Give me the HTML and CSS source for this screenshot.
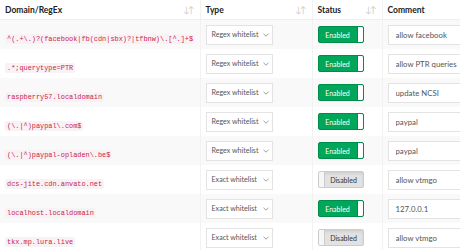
FILE: index.html
```html
<!DOCTYPE html>
<html lang="en">
<head>
  <meta charset="UTF-8">
  <title>Whitelist</title>
  <link rel="stylesheet" href="styles.css">
</head>
<body>
  <div class="table-wrap">
    <table class="list-table">
      <colgroup>
        <col class="col-domain">
        <col class="col-type">
        <col class="col-status">
        <col class="col-comment">
      </colgroup>
      <thead>
        <tr>
          <th><span>Domain/RegEx</span><span class="sort">&#8595;&#8593;</span></th>
          <th><span>Type</span><span class="sort">&#8595;&#8593;</span></th>
          <th><span>Status</span><span class="sort">&#8595;&#8593;</span></th>
          <th><span>Comment</span></th>
        </tr>
      </thead>
      <tbody id="rows"></tbody>
    </table>
  </div>

  <script>
    const entries = [
      ['^(.+\\.)?(facebook|fb(cdn|sbx)?|tfbnw)\\.[^.]+$', 'Regex whitelist', true, 'allow facebook'],
      ['.*;querytype=PTR', 'Regex whitelist', true, 'allow PTR queries'],
      ['raspberry57.localdomain', 'Regex whitelist', true, 'update NCSI'],
      ['(\\.|^)paypal\\.com$', 'Regex whitelist', true, 'paypal'],
      ['(\\.|^)paypal-opladen\\.be$', 'Regex whitelist', true, 'paypal'],
      ['dcs-jite.cdn.anvato.net', 'Exact whitelist', false, 'allow vtmgo'],
      ['localhost.localdomain', 'Exact whitelist', true, '127.0.0.1'],
      ['tkx.mp.lura.live', 'Exact whitelist', false, 'allow vtmgo']
    ];

    const tbody = document.getElementById('rows');

    entries.forEach(entry => {
      const [domain, type, enabled, comment] = entry;
      const tr = document.createElement('tr');

      const tdDomain = document.createElement('td');
      const code = document.createElement('code');
      code.textContent = domain;
      tdDomain.appendChild(code);

      const tdType = document.createElement('td');
      tdType.innerHTML =
        '<div class="select"><span class="select-text"></span>' +
        '<svg class="chevron" width="6" height="4" viewBox="0 0 6 4"><path d="M0.5 0.8 L3 3.2 L5.5 0.8" fill="none" stroke="#888" stroke-width="0.8"/></svg></div>';
      tdType.querySelector('.select-text').textContent = type;

      const tdStatus = document.createElement('td');
      tdStatus.innerHTML = enabled
        ? '<div class="toggle on"><span class="toggle-label">Enabled</span><span class="handle"></span></div>'
        : '<div class="toggle off"><span class="handle"></span><span class="toggle-label">Disabled</span></div>';

      const tdComment = document.createElement('td');
      const input = document.createElement('input');
      input.type = 'text';
      input.className = 'comment';
      input.value = comment;
      tdComment.appendChild(input);

      tr.append(tdDomain, tdType, tdStatus, tdComment);
      tbody.appendChild(tr);
    });
  </script>
</body>
</html>
```

FILE: styles.css
```css
body {
  margin: 0;
  background-color: #fff;
  font-family: Lato, "Liberation Sans", sans-serif;
  color: #333;
}
.table-wrap {
  width: 460px;
  height: 250px;
  overflow: hidden;
}
.list-table {
  table-layout: fixed;
  width: 520px;
  border-collapse: collapse;
}
.col-domain { width: 200px; }
.col-type { width: 112px; }
.col-status { width: 70px; }
.col-comment { width: 138px; }
.list-table th {
  height: 19px;
  padding: 0 5px;
  font-size: 8.5px;
  font-weight: bold;
  color: #222;
  text-align: left;
  border-bottom: 1px solid #eee;
  border-left: 1px solid #f2f2f2;
}
.list-table th:first-child,
.list-table td:first-child {
  border-left: none;
}
.list-table th span {
  vertical-align: middle;
}
.list-table th .sort {
  float: right;
  font-size: 9px;
  font-weight: normal;
  color: #ccc;
  letter-spacing: -2px;
  margin-right: 2px;
}
.list-table td {
  height: 29px;
  padding: 0 5px;
  border-left: 1px solid #f2f2f2;
  vertical-align: middle;
}
.list-table tbody tr:nth-child(odd) {
  background-color: #f9f9f9;
}
code {
  display: inline-block;
  font-family: "Liberation Mono", monospace;
  font-size: 6.9px;
  line-height: 10px;
  color: #c7254e;
  background-color: #f9f2f4;
  padding: 0 2px;
  border-radius: 2px;
  white-space: nowrap;
}
.select {
  display: flex;
  align-items: center;
  gap: 3px;
  width: 67px;
  height: 20px;
  padding: 0 3px 0 5px;
  box-sizing: border-box;
  background-color: #fff;
  border: 1px solid #e3e3e3;
  font-size: 7.1px;
  color: #555;
  white-space: nowrap;
}
.select-text {
  flex: 1;
}
.chevron {
  flex-shrink: 0;
}
.toggle {
  display: flex;
  width: 46px;
  height: 17px;
  border-radius: 2px;
  overflow: hidden;
  box-sizing: border-box;
  font-size: 7px;
}
.toggle-label {
  flex: 1;
  display: flex;
  align-items: center;
  justify-content: center;
}
.toggle.on {
  background-color: #00a65a;
  border: 1px solid #008d4c;
  color: #fff;
}
.toggle.on .handle {
  width: 5px;
  background-color: #fff;
  border-left: 1px solid #008d4c;
  border-radius: 0 1px 1px 0;
}
.toggle.off {
  background-color: #e2e2e2;
  border: 1px solid #ccc;
  color: #333;
  box-shadow: inset 0 2px 3px rgba(0, 0, 0, 0.08);
}
.toggle.off .handle {
  width: 5px;
  background-color: #f6f6f6;
  border-right: 1px solid #ccc;
}
.comment {
  display: block;
  width: 100%;
  height: 20px;
  box-sizing: border-box;
  padding: 0 7px;
  border: 1px solid #e3e3e3;
  font-family: Lato, "Liberation Sans", sans-serif;
  font-size: 7.8px;
  color: #555;
  background-color: #fff;
}
```
